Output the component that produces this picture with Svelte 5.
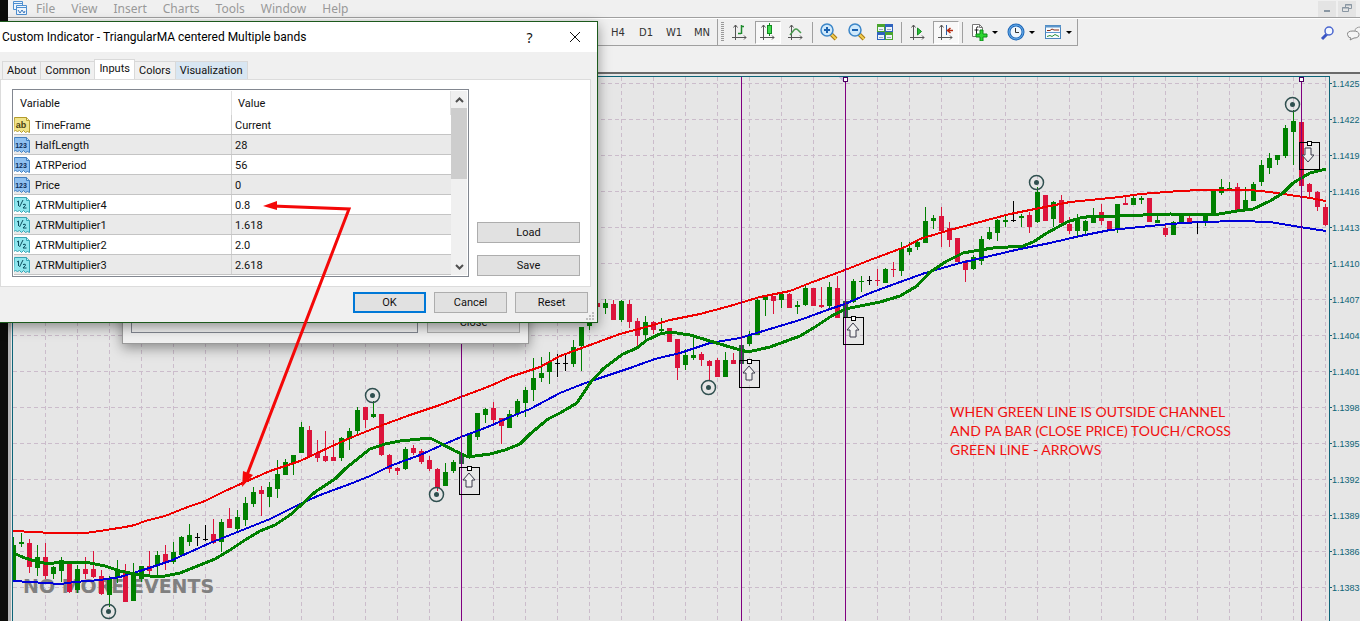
<script>
    const menus = ['File', 'View', 'Insert', 'Charts', 'Tools', 'Window', 'Help'];
    const timeFrames = ['H4', 'D1', 'W1', 'MN'];
    const tabs = ['About', 'Common', 'Inputs', 'Colors', 'Visualization'];
    const notes = ['WHEN GREEN LINE IS OUTSIDE CHANNEL', 'AND PA BAR (CLOSE PRICE) TOUCH/CROSS', 'GREEN LINE - ARROWS'];

    const inputs = [
        { type: 'ab', name: 'TimeFrame', value: 'Current' },
        { type: '123', name: 'HalfLength', value: '28' },
        { type: '123', name: 'ATRPeriod', value: '56' },
        { type: '123', name: 'Price', value: '0' },
        { type: '½', name: 'ATRMultiplier4', value: '0.8' },
        { type: '½', name: 'ATRMultiplier1', value: '1.618' },
        { type: '½', name: 'ATRMultiplier2', value: '2.0' },
        { type: '½', name: 'ATRMultiplier3', value: '2.618' }
    ];

    const typeColors = {
        'ab': ['#f1e48a', '#b39b2c', '#4a4210'],
        '123': ['#8fc0f0', '#3f7fc0', '#0c2c58'],
        '½': ['#8fe6ee', '#35a3b3', '#0b4b5c']
    };

    let selectedTab = $state('Inputs');

    // chart geometry
    const firstBar = 13;
    const barStep = 8;
    const gridX = Array.from({ length: 41 }, (_, i) => 45 + i * 32);
    const priceLabels = Array.from({ length: 15 }, (_, i) => ({
        y: 83 + i * 36,
        text: (1.1425 - i * 0.0003).toFixed(4)
    }));

    // color (g = up, r = down, k = doji, d = up on an event line), high, body top, body bottom, low
    const bars = `
        g 537 545 580 580,g 533 542 544 547,r 539 543 567 573,g 545 557 568 576,r 543 557 576 579,g 566 567 574 579,
        g 557 560 571 582,r 563 564 592 593,g 565 569 590 593,r 557 569 574 579,r 551 569 577 578,r 570 576 594 595,
        g 576 579 595 607,g 560 569 577 583,r 564 571 602 602,g 563 573 601 601,g 566 566 579 582,r 551 566 571 576,
        g 551 555 565 575,r 545 554 563 570,g 542 552 562 564,g 536 537 555 557,g 524 535 542 546,k 533 537 538 546,
        k 525 539 540 541,r 519 534 543 544,g 519 522 542 552,r 508 519 528 528,g 510 517 529 533,g 497 503 520 526,
        g 487 492 504 507,r 486 490 494 516,g 482 487 497 507,g 460 474 489 498,g 459 462 475 475,g 455 455 464 475,
        g 422 427 453 453,r 426 430 456 456,r 440 453 458 462,r 431 456 461 462,r 440 457 461 461,g 437 438 458 461,
        g 428 431 439 450,g 407 410 431 434,r 407 407 420 428,g 401 414 417 418,r 414 414 455 456,r 454 455 469 473,
        r 467 468 471 475,g 447 449 469 470,r 445 448 453 455,r 449 451 462 464,r 456 460 469 471,r 468 469 488 491,
        g 463 472 486 486,g 460 462 471 473,d 453 454 464 464,g 434 434 457 459,g 413 413 437 440,g 408 409 415 423,
        r 402 408 420 423,r 418 418 426 444,g 410 414 428 428,g 399 401 414 417,g 387 390 403 417,g 358 378 390 401,
        g 357 373 378 382,g 352 362 372 384,k 354 363 364 377,k 355 363 364 371,g 340 347 364 367,g 327 327 346 371,
        g 310 315 326 330,r 299 303 307 314,g 299 303 308 314,r 300 304 320 320,g 300 301 320 322,r 300 304 322 328,
        r 318 321 336 346,g 316 322 335 339,r 321 322 330 334,g 318 329 331 332,r 328 328 342 342,r 339 339 368 380,
        g 349 355 365 370,g 335 355 358 360,r 352 354 360 366,r 360 361 366 381,r 358 360 377 377,g 352 360 377 377,
        r 353 360 364 364,d 345 345 364 364,g 331 336 344 346,g 299 300 335 335,g 297 297 300 316,r 296 296 301 314,
        g 292 294 300 308,r 293 294 308 308,g 301 305 307 314,g 286 288 305 306,r 288 288 306 306,r 287 305 307 308,
        g 282 287 306 308,r 276 288 318 318,d 301 301 318 318,g 279 281 302 303,g 276 281 282 292,k 276 280 281 285,
        r 269 280 281 286,g 268 269 283 283,r 262 269 270 277,g 242 249 271 276,g 242 248 252 255,g 239 242 247 250,
        g 207 221 243 243,g 215 218 221 229,r 207 216 231 247,r 222 228 240 247,r 238 238 262 262,r 260 261 270 282,
        g 255 257 269 270,g 236 239 261 265,g 227 232 239 240,g 219 220 233 241,g 215 220 222 227,k 201 220 221 222,
        g 214 216 218 227,r 212 215 227 233,g 187 192 222 223,r 195 195 221 221,g 201 202 219 227,r 195 200 223 223,
        r 217 224 231 234,g 214 219 231 236,g 220 221 231 235,g 208 215 223 223,r 204 212 221 225,r 221 221 229 229,
        g 204 204 228 233,r 195 203 205 205,g 195 198 205 205,g 196 198 200 204,r 198 198 222 222,g 215 220 223 223,
        r 223 228 235 237,g 221 222 235 235,g 215 216 222 223,r 215 218 223 223,k 221 222 223 234,g 215 216 222 226,
        g 190 190 216 216,g 179 187 193 195,g 182 188 190 190,r 183 187 210 211,g 187 200 211 211,g 182 184 201 201,
        g 160 165 182 186,g 153 158 168 174,g 155 155 160 165,g 125 128 156 158,g 110 121 132 165,r 122 122 186 186,
        r 183 184 192 197,r 191 192 207 211,r 204 207 225 226`
        .split(',')
        .map((line, i) => {
            const [kind, ...prices] = line.trim().split(' ');
            const [high, top, bottom, low] = prices.map(Number);
            return { kind, high, top, bottom, low, x: firstBar + i * barStep };
        });

    const upperBand = '13,531 35,532 50,533 85,533 100,531 125,527 135,525 145,521 165,516 185,508 205,501 225,491 245,482 270,471 300,461 330,447 350,438 380,426 410,415 440,405 461,397 490,386 510,377 540,367 560,356 590,345 620,334 650,326 670,320 700,314 730,306 760,297 790,291 810,283 845,270 870,260 905,247 920,239 950,230 980,222 1010,214 1040,208 1070,202 1100,199 1120,197 1140,194 1180,191 1200,190 1250,190 1270,192 1290,195 1310,198 1326,201';
    const lowerBand = '13,581 30,582 60,584 75,582 100,580 120,577 140,571 170,561 190,552 210,543 240,531 270,519 300,504 320,495 350,484 370,476 390,466 420,455 440,446 461,437 490,426 510,417 530,409 560,393 580,385 600,378 630,368 655,359 680,353 710,343 740,338 770,329 800,320 830,309 845,304 870,293 900,282 925,273 960,263 990,256 1020,249 1050,243 1080,236 1110,230 1130,228 1150,226 1170,224 1200,222 1240,221 1270,222 1300,227 1326,231';
    const average = '13,553 25,558 35,561 48,564 60,562 90,563 105,566 120,571 135,574 150,576 165,576 180,573 200,565 215,559 230,550 245,540 260,531 275,525 290,515 300,506 315,492 335,479 345,469 355,461 370,449 385,444 400,441 430,438 440,443 455,451 468,457 490,454 505,450 520,444 530,434 548,419 560,413 577,403 590,383 603,369 623,354 637,348 647,340 660,334 670,332 690,335 710,341 730,347 748,352 770,347 800,336 815,327 830,317 845,309 860,306 880,302 900,296 917,286 930,272 947,261 963,253 980,250 993,248 1023,246 1033,242 1047,233 1067,222 1080,218 1093,216 1117,216 1170,214 1213,215 1237,211 1253,209 1270,201 1283,193 1293,183 1310,173 1326,169';

    const eventLines = [461, 741, 845, 1301];
    const swings = [[372, 395], [436, 494], [108, 611], [708, 387], [1036, 182], [1292, 104]];
    const signals = [
        { x: 459, y: 467, up: true },
        { x: 739, y: 360, up: true },
        { x: 843, y: 317, up: true },
        { x: 1299, y: 142, up: false }
    ];
</script>

{#snippet axes()}
    <path d="M4.5 2v15M1 14.5h14M2.5 4.5l2-2.500 2 2.500M13 12.500l2 2-2 2" fill="none" stroke="#555" />
{/snippet}

{#snippet magnifier(plus)}
    <svg width="18" height="18" viewBox="0 0 18 18">
        <path d="M11 11l5 5" stroke="#a87812" stroke-width="4" />
        <path d="M11 11l5 5" stroke="#f3cf52" stroke-width="2" />
        <circle cx="7" cy="7" r="6" fill="#cfe9fb" stroke="#3c86c8" stroke-width="1.500" />
        <path d={plus ? 'M4 7h6M7 4v6' : 'M4 7h6'} stroke="#1b62b0" stroke-width="2" />
    </svg>
{/snippet}

<div class="desktop">
    <div class="terminal">
        <nav class="menu-bar">
            <svg width="16" height="16" viewBox="0 0 16 16">
                <path d="M1.500.5h9v8h-9zM1.500 2.500h9" fill="#eef5fc" stroke="#4e8fd0" />
                <path d="M4.500 4.500h10v9h-10zM4.500 6.500h10" fill="#eef5fc" stroke="#4e8fd0" />
                <path d="M6 9l2 3 2-3 2 3 1-2" fill="none" stroke="#3b78bd" />
            </svg>
            {#each menus as menu}
                <button class="menu">{menu}</button>
            {/each}
            <div class="window-buttons">
                <button aria-label="Minimize">
                    <svg width="16" height="16" viewBox="0 0 16 16"><path d="M5 10h6" stroke="#8a97a3" stroke-width="2" /></svg>
                </button>
                <button aria-label="Restore">
                    <svg width="16" height="16" viewBox="0 0 16 16">
                        <path d="M6.500 6V3.500h6v4H10M6 4h7M3.500 6.500h6v4h-6zM3 7h7" fill="none" stroke="#8a97a3" />
                    </svg>
                </button>
            </div>
        </nav>

        <div class="toolbars">
            <div class="toolbar periods">
                {#each timeFrames as frame}
                    <button class="period">{frame}</button>
                {/each}
            </div>
            <div class="toolbar">
                <span class="grip"></span>
                <button class="tool" aria-label="Bar chart">
                    <svg width="18" height="18" viewBox="0 0 18 18">
                        {@render axes()}
                        <path d="M10.500 2v9M10 3.500h3M7 10.500h3" fill="none" stroke="#1d8a2c" stroke-width="1.500" />
                    </svg>
                </button>
                <button class="tool pressed" aria-label="Candlesticks">
                    <svg width="18" height="18" viewBox="0 0 18 18">
                        {@render axes()}
                        <path d="M10.500 0v13" stroke="#118a20" />
                        <rect x="8.500" y="2.500" width="4" height="8" fill="#3fdc4c" stroke="#118a20" />
                    </svg>
                </button>
                <button class="tool" aria-label="Line chart">
                    <svg width="18" height="18" viewBox="0 0 18 18">
                        {@render axes()}
                        <path d="M3 12l4-5q2-2 4 0l3 3" fill="none" stroke="#4a9a50" stroke-width="1.500" />
                    </svg>
                </button>
                <span class="separator"></span>
                <button class="tool" aria-label="Zoom in">{@render magnifier(true)}</button>
                <button class="tool" aria-label="Zoom out">{@render magnifier(false)}</button>
                <button class="tool" aria-label="Tile windows">
                    <svg width="18" height="18" viewBox="0 0 18 18">
                        <path d="M1 1h8v8H1zM9 9h8v8H9z" fill="#4aa52e" />
                        <path d="M9 1h8v8H9zM1 9h8v8H1z" fill="#2f63bd" />
                        <path d="M2 4h6v4H2zM10 4h6v4h-6zM2 12h6v4H2zM10 12h6v4h-6z" fill="#eef4fb" />
                        <path d="M3 6.500h4M11 6.500h4M3 14.500h4M11 14.500h4" stroke="#9ab" />
                    </svg>
                </button>
                <span class="separator"></span>
                <button class="tool" aria-label="Auto scroll">
                    <svg width="18" height="18" viewBox="0 0 18 18">
                        {@render axes()}
                        <path d="M8.500 5l4 3.500-4 3.500z" fill="#2fbf3a" stroke="#118a20" />
                    </svg>
                </button>
                <button class="tool pressed" aria-label="Chart shift">
                    <svg width="18" height="18" viewBox="0 0 18 18">
                        {@render axes()}
                        <path d="M9.500 2v10" stroke="#2d62a8" />
                        <path d="M16 7.500h-5M13.500 5l-3 2.500 3 2.500" fill="none" stroke="#b8290e" stroke-width="1.500" />
                    </svg>
                </button>
                <span class="separator"></span>
                <button class="tool drop" aria-label="Indicators">
                    <svg width="18" height="18" viewBox="0 0 18 18">
                        <path d="M2.500 1.500h7l3 3v9h-10zM9.500 1.500v3h3" fill="#fff" stroke="#777" />
                        <path d="M8.500 4q-2-1-2 1.500V11M4.500 7h4" fill="none" stroke="#222" />
                        <path d="M10 7h3v4h4v3h-4v4h-3v-4H6v-3h4z" fill="#2bd62f" stroke="#0d8a18" />
                    </svg>
                    <span class="caret"></span>
                </button>
                <button class="tool drop" aria-label="Periods">
                    <svg width="18" height="18" viewBox="0 0 18 18">
                        <circle cx="9" cy="9" r="7" fill="#eef6fd" stroke="#1f67b8" stroke-width="3" />
                        <circle cx="9" cy="9" r="7" fill="none" stroke="#6db4ee" />
                        <path d="M8.500 5v4.500H12" fill="none" stroke="#333" />
                    </svg>
                    <span class="caret"></span>
                </button>
                <button class="tool drop" aria-label="Templates">
                    <svg width="18" height="18" viewBox="0 0 18 18">
                        <rect x="1.500" y="2.500" width="15" height="13" fill="#f8fbfe" stroke="#4b86bd" />
                        <path d="M1 3.500h16" stroke="#5d97cd" stroke-width="2" />
                        <path d="M2 9.500h14" stroke="#5d97cd" />
                        <path d="M3 7.500h3l2-1.500 2 1h5" fill="none" stroke="#8b2f14" />
                        <path d="M3 13.500l3-1 2 1 3-2 4 2" fill="none" stroke="#28903a" />
                    </svg>
                    <span class="caret"></span>
                </button>
            </div>
            <div class="right-tools">
                <button aria-label="Search">
                    <svg width="16" height="16" viewBox="0 0 16 16">
                        <path d="M7 9l-5 5" stroke="#3a55c4" stroke-width="3" />
                        <circle cx="9" cy="6" r="4" fill="#f4f8ff" stroke="#4a66cf" stroke-width="1.500" />
                    </svg>
                </button>
                <button aria-label="Chat">
                    <svg width="22" height="16" viewBox="0 0 22 16">
                        <path d="M9 6q0-4 6-4t6 4-6 4" fill="#f5f5f5" stroke="#999" />
                        <path d="M5 13l-1 2 4-2q5 0 5-3.500T7 6 1.500 9.500 5 13z" fill="#f5f5f5" stroke="#888" />
                    </svg>
                </button>
            </div>
        </div>

        <div class="chart-frame">
            <svg class="chart" viewBox="12 76 1348 545" shape-rendering="crispEdges">
                <g class="grid">
                    {#each gridX as x}
                        <line x1={x + 0.5} x2={x + 0.5} y1="77" y2="621" />
                    {/each}
                    {#each priceLabels as label}
                        <line x1="13" x2="1329" y1={label.y + 0.5} y2={label.y + 0.5} />
                    {/each}
                </g>
                <path d="M838 77h7v6z" fill="#cdbfdc" />

                <text class="events" x="23" y="593">NO MORE EVENTS</text>

                {#each bars as bar}
                    <g class={bar.kind}>
                        <rect x={bar.x} y={bar.high} width="1" height={bar.low - bar.high} />
                        <rect x={bar.x - 2} y={bar.top} width="5" height={bar.bottom - bar.top} />
                    </g>
                {/each}

                <polyline points={upperBand} class="band" stroke="#f00000" />
                <polyline points={lowerBand} class="band" stroke="#0000d8" />
                <polyline points={average} class="average" />

                {#each eventLines as x}
                    <line class="event" x1={x + 0.5} x2={x + 0.5} y1="77" y2="621" />
                {/each}
                {#each eventLines.slice(2) as x}
                    <rect x={x - 1.5} y="77.5" width="4" height="4" fill="#fff" stroke="#4b0060" />
                {/each}

                <g shape-rendering="auto">
                    {#each swings as [x, y]}
                        <circle cx={x + 0.5} cy={y + 0.5} r="7" fill="none" stroke="#2f4f4f" stroke-width="1.500" />
                        <circle cx={x + 0.5} cy={y + 0.5} r="2.500" fill="#2f4f4f" />
                    {/each}
                </g>

                {#each signals as signal}
                    <g transform="translate({signal.x} {signal.y})">
                        <rect x=".5" y=".5" width="20" height="27" fill="none" stroke="#000" />
                        <rect x="8.500" y="-.5" width="4" height="4" fill="#fff" stroke="#000" />
                        {#if signal.up}
                            <path class="arrow" d="M10 6l6 7h-3v7H7v-7H4z" />
                        {:else}
                            <path class="arrow" d="M9 20l6-7h-3V6H6v7H3z" />
                        {/if}
                    </g>
                {/each}

                <g class="note">
                    {#each notes as note, i}
                        <text x="950" y={417 + i * 19}>{note}</text>
                    {/each}
                </g>

                <path d="M12.500 621V76.500H1329.500V621" fill="none" stroke="#0d6478" />
                <g class="prices">
                    {#each priceLabels as label}
                        <rect x="1330" y={label.y} width="2" height="1" />
                        <text x="1332" y={label.y + 4}>{label.text}</text>
                    {/each}
                </g>
            </svg>
        </div>
    </div>

    <div class="window list-window">
        <div class="list-box"></div>
        <button class="button">Close</button>
    </div>

    <div class="window dialog" role="dialog" aria-labelledby="dialog-title">
        <header class="title-bar">
            <h1 id="dialog-title">Custom Indicator - TriangularMA centered Multiple bands</h1>
            <button aria-label="Help">?</button>
            <button aria-label="Close">
                <svg width="12" height="12" viewBox="0 0 12 12"><path d="M1 1l10 10M11 1L1 11" stroke="#111" /></svg>
            </button>
        </header>

        <div class="tabs" role="tablist">
            {#each tabs as tab}
                <button
                    class="tab"
                    class:selected={tab === selectedTab}
                    class:hot={tab === 'Visualization'}
                    role="tab"
                    aria-selected={tab === selectedTab}
                    onclick={() => (selectedTab = tab)}>{tab}</button>
            {/each}
        </div>

        <div class="panel">
            <div class="list">
                <table>
                    <thead>
                        <tr><th>Variable</th><th>Value</th></tr>
                    </thead>
                    <tbody>
                        {#each inputs as input}
                            <tr>
                                <td>
                                    <span class="variable">
                                        <svg width="17" height="16" viewBox="0 0 17 16">
                                            <path
                                                d="M.5.5h12l3 3v12l-2-1-2 1-2-2-2 2-2-2-2 1-2-1-2 1z"
                                                fill={typeColors[input.type][0]}
                                                stroke={typeColors[input.type][1]} />
                                            <path d="M12.500.5v3h3" fill="#fff" fill-opacity=".5" stroke={typeColors[input.type][1]} />
                                            {#if input.type === '½'}
                                                <path d="M3 5l1.500-1v5M9 3L5.500 10M9 7.500q3-1 2.500.8L9 11h3.500" fill="none" stroke={typeColors['½'][2]} />
                                            {:else}
                                                <text x="7" y="11" class="glyph" class:small={input.type === '123'} fill={typeColors[input.type][2]}>{input.type}</text>
                                            {/if}
                                        </svg>
                                        {input.name}
                                    </span>
                                </td>
                                <td>{input.value}</td>
                            </tr>
                        {/each}
                    </tbody>
                </table>
                <div class="scroll-bar">
                    <button aria-label="Scroll up">
                        <svg width="9" height="6" viewBox="0 0 9 6"><path d="M1 5l3.500-3.500L8 5" fill="none" stroke="#505050" stroke-width="2" /></svg>
                    </button>
                    <div class="thumb"></div>
                    <button aria-label="Scroll down">
                        <svg width="9" height="6" viewBox="0 0 9 6"><path d="M1 1l3.500 3.500L8 1" fill="none" stroke="#505050" stroke-width="2" /></svg>
                    </button>
                </div>
            </div>
            <div class="side-buttons">
                <button class="button">Load</button>
                <button class="button">Save</button>
            </div>
        </div>

        <footer class="actions">
            <button class="button default">OK</button>
            <button class="button">Cancel</button>
            <button class="button">Reset</button>
        </footer>
        <svg class="size-grip" width="8" height="8" viewBox="0 0 8 8">
            <path d="M6 0h2v2H6zM3 3h2v2H3zM6 3h2v2H6zM0 6h2v2H0zM3 6h2v2H3zM6 6h2v2H6z" fill="#bdbdbd" />
        </svg>
    </div>

    <!-- hand-drawn pointer from the 0.8 value to the upper band -->
    <svg class="pointer" width="360" height="500" viewBox="0 0 360 500">
        <path d="M272 206L349 209L247 475" fill="none" stroke="#f40808" stroke-width="3" />
        <path d="M263 206l14-5v9zM242 487l1-16 10 4z" fill="#f40808" />
    </svg>
</div>

<style>
    :global(body) {
        background: #0c0c0a;
        overflow: hidden;
    }

    button {
        font: inherit;
        color: inherit;
        background: none;
        border: none;
        padding: 0;
    }

    svg {
        display: block;
        flex: none;
    }

    .desktop {
        position: relative;
        padding-left: 8px;
        font-family: Roboto, "Liberation Sans", sans-serif;
        font-size: 11px;
        color: #111;
    }

    .terminal {
        background: #f0f0f0;
    }

    .menu-bar {
        display: flex;
        align-items: center;
        height: 18px;
        padding: 0 4px;
        border-bottom: 1px solid #a0a0a0;
        box-sizing: border-box;
        font: 12px "Noto Sans", sans-serif;
        line-height: 16px;
        color: #999;
    }

    .menu {
        padding: 0 8px;
    }

    .window-buttons {
        display: flex;
        gap: 2px;
        margin-left: auto;
    }

    .window-buttons button {
        padding: 0 1px;
        background: #e4e4e4;
    }

    .toolbars {
        display: flex;
        height: 56px;
        align-items: flex-start;
        border-top: 1px solid #fff;
        border-bottom: 2px solid #6a6a6a;
        box-sizing: border-box;
    }

    .toolbar {
        display: flex;
        align-items: center;
        height: 27px;
        border-right: 1px solid #a0a0a0;
        border-bottom: 1px solid #a0a0a0;
        box-sizing: border-box;
        padding: 0 1px 0 3px;
    }

    .periods {
        width: 710px;
        justify-content: flex-end;
    }

    .period {
        width: 28px;
        font-family: "DejaVu Sans", sans-serif;
        font-size: 10px;
        color: #333;
    }

    .grip {
        width: 3px;
        height: 20px;
        margin-right: 2px;
        background: repeating-linear-gradient(#999 0 1px, #f0f0f0 1px 2px);
    }

    .tool {
        display: flex;
        align-items: center;
        justify-content: center;
        width: 26px;
        height: 23px;
        margin: 0 1px;
        box-sizing: border-box;
    }

    .pressed {
        background: #f8f8f8;
        border: 1px solid #a0a0a0;
        border-right-color: #fff;
        border-bottom-color: #fff;
    }

    .drop {
        width: 37px;
        margin: 0;
        gap: 4px;
    }

    .caret {
        border: 3px solid transparent;
        border-top-color: #000;
        border-bottom-width: 0;
    }

    .separator {
        width: 1px;
        height: 21px;
        margin: 0 2px;
        background: #a0a0a0;
    }

    .right-tools {
        display: flex;
        align-items: center;
        gap: 10px;
        height: 27px;
        margin-left: auto;
        margin-right: -8px;
    }

    .chart-frame {
        padding: 2px 0 0 1px;
        border-left: 3px solid #b4b4b4;
        background: #e6e6e6;
    }

    .chart {
        width: 100%;
        height: auto;
    }

    .grid {
        stroke: #cbbccb;
        stroke-dasharray: 4 3;
    }

    .g {
        fill: #008000;
    }

    .r {
        fill: #dc143c;
    }

    .k {
        fill: #000;
    }

    .d {
        fill: #2c6040;
    }

    .band {
        fill: none;
        stroke-width: 2;
    }

    .average {
        fill: none;
        stroke: #008000;
        stroke-width: 3;
    }

    .event {
        stroke: #800080;
    }

    .arrow {
        fill: #f0f0f0;
        stroke: #3a3a4a;
        shape-rendering: auto;
    }

    .events {
        font: bold 19px "DejaVu Sans", sans-serif;
        fill: #808080;
    }

    .note {
        font: 14px Lato, sans-serif;
        fill: #f01010;
    }

    .prices {
        font: 9px "Liberation Sans", sans-serif;
        fill: #0d6478;
    }

    .window {
        position: absolute;
        background: #f0f0f0;
        box-shadow: 0 4px 12px rgba(0, 0, 0, 0.4);
        box-sizing: border-box;
    }

    .list-window {
        left: 122px;
        top: 291px;
        display: flex;
        gap: 9px;
        width: 407px;
        padding: 20px 8px 10px;
        border: 1px solid #999;
    }

    .list-box {
        flex: 1;
        border: 1px solid #828790;
    }

    .list-window .button {
        width: 93px;
    }

    .dialog {
        left: 0;
        top: 21px;
        width: 598px;
        border: 1px solid #1c5a1c;
        border-left: none;
    }

    .title-bar {
        display: flex;
        align-items: center;
        height: 30px;
        padding-left: 2px;
        background: #fff;
    }

    .title-bar h1 {
        flex: 1;
        margin: 0;
        font-size: 12px;
        font-weight: normal;
        color: #000;
    }

    .title-bar button {
        display: flex;
        align-items: center;
        justify-content: center;
        width: 45px;
        height: 30px;
        font: 14px "Noto Sans", sans-serif;
    }

    .tabs {
        display: flex;
        align-items: flex-end;
        height: 27px;
        padding-left: 2px;
    }

    .tab {
        height: 18px;
        padding: 0 4px;
        border: 1px solid #d9d9d9;
        border-bottom: none;
        margin-right: -1px;
    }

    .tab.hot {
        background: #d8e6f2;
    }

    .tab.selected {
        height: 20px;
        padding-bottom: 2px;
        background: #fff;
    }

    .panel {
        display: flex;
        align-items: flex-end;
        gap: 8px;
        margin-right: 6px;
        padding: 9px 10px 9px 11px;
        border: 1px solid #dcdcdc;
        background: #fff;
    }

    .list {
        display: flex;
        flex: 1;
        padding: 1px;
        border: 1px solid #828790;
    }

    table {
        flex: 1;
        border-collapse: collapse;
        table-layout: fixed;
    }

    th, td {
        padding: 1px 3px 0;
        text-align: left;
        font-weight: normal;
    }

    th {
        height: 23px;
        padding: 1px 6px 0;
        border-right: 1px solid #e2e2e2;
    }

    td {
        height: 18px;
        border-bottom: 1px solid #c4c4c4;
    }

    td:first-child {
        width: 217px;
        padding: 1px 0 0;
        border-right: 1px solid #d0d0d0;
    }

    th:first-child {
        width: 205px;
    }

    tbody tr:nth-child(even) {
        background: #eaeaea;
    }

    .variable {
        display: flex;
        align-items: center;
        gap: 4px;
    }

    .glyph {
        font: bold 9px "Liberation Sans", sans-serif;
        text-anchor: middle;
    }

    .glyph.small {
        font-size: 7px;
    }

    .scroll-bar {
        display: flex;
        flex-direction: column;
        width: 16px;
        background: #f0f0f0;
    }

    .scroll-bar button {
        display: flex;
        align-items: center;
        justify-content: center;
        height: 17px;
    }

    .thumb {
        height: 71px;
        margin-bottom: auto;
        background: #cdcdcd;
    }

    .side-buttons {
        display: grid;
        gap: 12px;
        width: 103px;
        padding-bottom: 1px;
    }

    .button {
        height: 21px;
        border: 1px solid #adadad;
        background: #e1e1e1;
    }

    .button.default {
        border: 2px solid #0078d7;
    }

    .actions {
        display: flex;
        justify-content: flex-end;
        gap: 8px;
        padding: 5px 9px 9px;
    }

    .actions .button {
        width: 73px;
    }

    .size-grip {
        position: absolute;
        right: 3px;
        bottom: 2px;
    }

    .pointer {
        position: absolute;
        left: 0;
        top: 0;
        pointer-events: none;
    }
</style>
